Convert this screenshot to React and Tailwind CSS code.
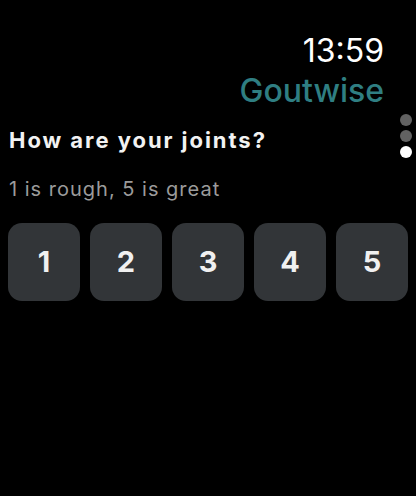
export default function App() {
  const font = { fontFamily: 'Inter, "Noto Sans", sans-serif' };
  return (
    <div className="relative w-[416px] h-[496px] bg-black overflow-hidden" style={font}>
      <div className="flex flex-col items-end pt-8 pr-8">
        <div className="text-[32px] leading-[38px] text-white font-normal">13:59</div>
        <div className="mt-[2px] text-[32px] leading-[38px] text-[#2f7e82] font-medium">Goutwise</div>
      </div>
      <div className="px-2">
        <div className="mt-4 text-[22px] leading-[28px] font-bold text-[#f2f2f2] pl-[1px] tracking-[1.95px]">How are your joints?</div>
        <div className="mt-[23px] text-[20px] leading-[24px] text-[#9b9b9b] pl-[1px] tracking-[1px]">1 is rough, 5 is great</div>
        <div className="mt-[22px] flex gap-[10px]">
          {[1, 2, 3, 4, 5].map((n) => (
            <div
              key={n}
              className="w-[72px] h-[78px] rounded-[14px] bg-[#323538] flex items-center justify-center text-[29px] font-bold text-[#f0f0f0]"
            >
              {n}
            </div>
          ))}
        </div>
      </div>
      <div className="absolute left-[400px] top-[114px] flex flex-col gap-[4px]">
        <div className="w-3 h-3 rounded-full bg-[#626262]" />
        <div className="w-3 h-3 rounded-full bg-[#626262]" />
        <div className="w-3 h-3 rounded-full bg-white" />
      </div>
    </div>
  );
}
